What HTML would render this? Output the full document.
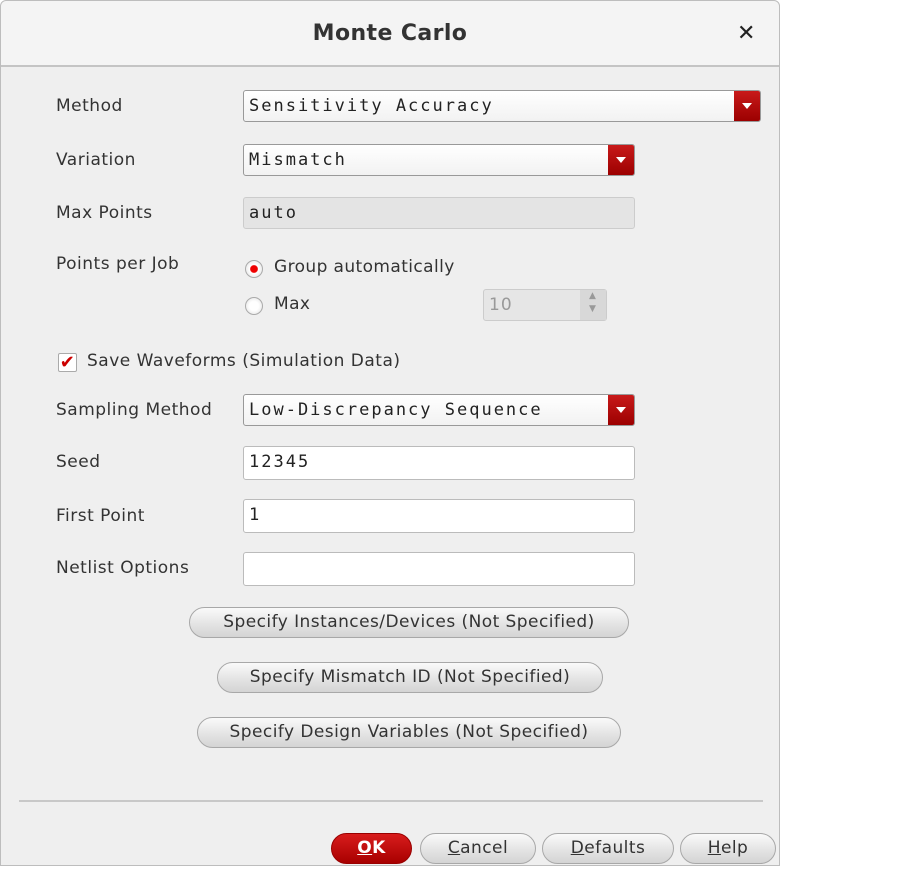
<!DOCTYPE html>
<html><head><style>
body{margin:0;width:915px;height:879px;background:#fff;font-family:"DejaVu Sans","Liberation Sans",sans-serif;position:relative;overflow:hidden}
.dlg{position:absolute;left:0;top:0;width:778px;height:864px;background:#efefef;border:1px solid #bdbdbd;border-radius:6px 6px 0 0}
.title{position:absolute;left:0;top:0;width:778px;height:64px;border-bottom:2px solid #c4c4c4;background:#f4f4f4;border-radius:6px 6px 0 0}
.a{position:absolute;letter-spacing:0.4px}
.lbl{position:absolute;left:55px;font-size:17px;color:#333;letter-spacing:0.5px}
.field{position:absolute;left:242px;height:32px;background:#fff;border:1px solid #bbb;border-radius:3px;box-sizing:border-box;font-family:"DejaVu Sans Mono","Liberation Mono",monospace;font-size:17px;letter-spacing:2px;line-height:30px;padding-left:5px;color:#222}
.dd{background:linear-gradient(#fff,#f2f2f2);border-color:#999}
.arr{position:absolute;right:0;top:0;width:26px;height:30px;background:linear-gradient(#c81a1a,#9c0000);border-radius:0 2px 2px 0}
.arr:after{content:"";position:absolute;left:8px;top:12px;border-left:5px solid transparent;border-right:5px solid transparent;border-top:6px solid #fff}
.btn{position:absolute;height:31px;border:1px solid #a8a8a8;border-radius:16px;background:linear-gradient(#fafafa,#e2e2e2 60%,#d4d4d4);box-sizing:border-box;text-align:center;font-size:17px;letter-spacing:0.45px;line-height:29px;color:#333}
u{text-decoration:underline}
</style></head><body>
<div class="dlg">
<div class="title"></div>
<div class="a" style="left:0;width:778px;top:20px;text-align:center;font-size:22px;font-weight:bold;color:#333">Monte Carlo</div>
<div class="a" style="left:736px;top:20px;font-size:22px;font-weight:bold;color:#222">✕</div>

<div class="lbl" style="top:95px">Method</div>
<div class="field dd" style="top:89px;width:518px">Sensitivity Accuracy<div class="arr"></div></div>
<div class="lbl" style="top:149px">Variation</div>
<div class="field dd" style="top:143px;width:392px">Mismatch<div class="arr"></div></div>
<div class="lbl" style="top:202px">Max Points</div>
<div class="field" style="top:196px;width:392px;background:#e4e4e4;border-color:#ccc">auto</div>
<div class="lbl" style="top:253px">Points per Job</div>
<div class="a" style="left:244px;top:259px;width:16px;height:16px;border-radius:50%;background:radial-gradient(#e00 30%,#fff 38%,#ddd);border:1px solid #aaa"></div>
<div class="a" style="left:273px;top:256px;font-size:17px;color:#333">Group automatically</div>
<div class="a" style="left:244px;top:296px;width:16px;height:16px;border-radius:50%;background:radial-gradient(#fff 40%,#ddd);border:1px solid #aaa"></div>
<div class="a" style="left:273px;top:293px;font-size:17px;color:#333">Max</div>
<div class="field" style="left:482px;top:288px;width:124px;background:#e6e6e6;border-color:#ccc;color:#999;font-family:'DejaVu Sans',sans-serif;letter-spacing:1px">10<div style="position:absolute;right:0;top:0;width:26px;height:30px;background:#d8d8d8;color:#999;font-size:9px;line-height:13px;text-align:center">▲<br>▼</div></div>
<div class="a" style="left:57px;top:352px;width:17px;height:17px;background:#fff;border:1px solid #aaa;border-radius:2px;color:#c00;font-size:18px;line-height:17px;text-align:center;font-weight:bold">✔</div>
<div class="a" style="left:86px;top:350px;font-size:17px;color:#333;letter-spacing:0.5px">Save Waveforms (Simulation Data)</div>
<div class="lbl" style="top:399px">Sampling Method</div>
<div class="field dd" style="top:393px;width:392px">Low-Discrepancy Sequence<div class="arr"></div></div>
<div class="lbl" style="top:451px">Seed</div>
<div class="field" style="top:445px;width:392px;height:34px">12345</div>
<div class="lbl" style="top:505px">First Point</div>
<div class="field" style="top:498px;width:392px;height:34px">1</div>
<div class="lbl" style="top:557px">Netlist Options</div>
<div class="field" style="top:551px;width:392px;height:34px"></div>
<div class="btn" style="left:188px;top:606px;width:440px">Specify Instances/Devices (Not Specified)</div>
<div class="btn" style="left:216px;top:661px;width:386px">Specify Mismatch ID (Not Specified)</div>
<div class="btn" style="left:196px;top:716px;width:424px">Specify Design Variables (Not Specified)</div>
<div class="a" style="left:18px;top:799px;width:744px;height:2px;background:#c8c8c8"></div>
<div class="btn" style="left:330px;top:832px;width:81px;background:linear-gradient(#d81c1c,#a80000);border-color:#900;color:#fff;font-weight:bold"><u>O</u>K</div>
<div class="btn" style="left:419px;top:832px;width:116px"><u>C</u>ancel</div>
<div class="btn" style="left:541px;top:832px;width:132px"><u>D</u>efaults</div>
<div class="btn" style="left:679px;top:832px;width:96px"><u>H</u>elp</div>
</div>
</body></html>
